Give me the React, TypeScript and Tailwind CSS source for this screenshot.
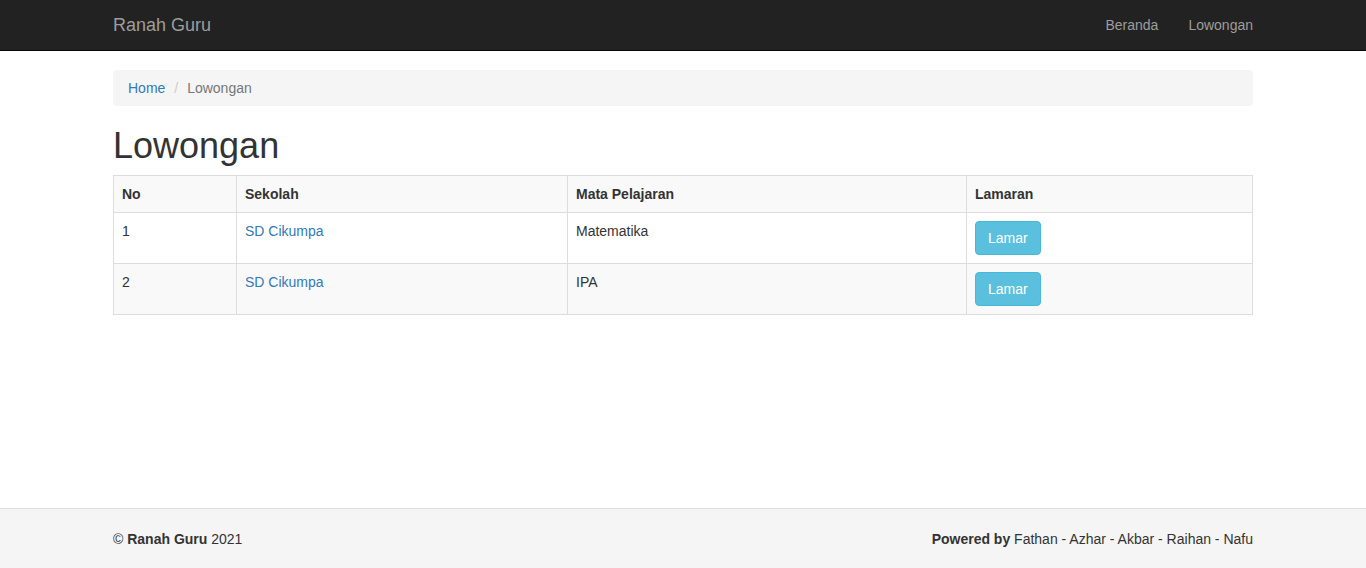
const rows = [
  { no: 1, sekolah: "SD Cikumpa", mapel: "Matematika" },
  { no: 2, sekolah: "SD Cikumpa", mapel: "IPA" },
]

export default function App() {
  return (
    <div className="min-h-screen flex flex-col bg-white text-[14px] leading-[20px] text-[#333] font-['Liberation_Sans',Arial,sans-serif]">
      <nav className="h-[51px] bg-[#222] border-b border-[#080808]">
        <div className="w-[1140px] mx-auto flex items-center justify-between h-[50px]">
          <a className="text-[18px] leading-[20px] text-[#9d9d9d]">Ranah Guru</a>
          <ul className="flex -mr-[15px]">
            <li><a className="block px-[15px] py-[15px] text-[#9d9d9d]">Beranda</a></li>
            <li><a className="block px-[15px] py-[15px] text-[#9d9d9d]">Lowongan</a></li>
          </ul>
        </div>
      </nav>

      <main className="w-[1140px] mx-auto">
        <ol className="mt-[19px] mb-[20px] flex px-[15px] py-[8px] bg-[#f5f5f5] rounded-[4px]">
          <li><a className="text-[#337ab7]">Home</a></li>
          <li className="text-[#777] ml-[4px]">
            <span className="px-[5px] text-[#ccc]">/{"\u00a0"}</span>
            <span>Lowongan</span>
          </li>
        </ol>

        <h1 className="text-[36px] leading-[39.6px] font-normal mb-[9px]">Lowongan</h1>

        <table className="w-full border-collapse border border-[#ddd] mb-[20px]">
          <tbody>
            <tr className="bg-[#f9f9f9]">
              <th className="w-[123px] border border-[#ddd] p-[8px] text-left font-bold">No</th>
              <th className="w-[331px] border border-[#ddd] p-[8px] text-left font-bold">Sekolah</th>
              <th className="w-[399px] border border-[#ddd] p-[8px] text-left font-bold">Mata Pelajaran</th>
              <th className="border border-[#ddd] p-[8px] text-left font-bold">Lamaran</th>
            </tr>
            {rows.map((r, i) => (
              <tr key={r.no} className={i % 2 === 1 ? "bg-[#f9f9f9]" : "bg-white"}>
                <td className="border border-[#ddd] p-[8px] align-top">{r.no}</td>
                <td className="border border-[#ddd] p-[8px] align-top">
                  <a className="text-[#337ab7]">{r.sekolah}</a>
                </td>
                <td className="border border-[#ddd] p-[8px] align-top">{r.mapel}</td>
                <td className="border border-[#ddd] p-[8px] align-top">
                  <button className="h-[34px] px-[12px] py-[6px] bg-[#5bc0de] border border-[#46b8da] rounded-[4px] text-white leading-[20px]">
                    Lamar
                  </button>
                </td>
              </tr>
            ))}
          </tbody>
        </table>
      </main>

      <footer className="mt-auto h-[60px] bg-[#f5f5f5] border-t border-[#ddd]">
        <div className="w-[1140px] mx-auto h-full flex items-center justify-between pt-[1px]">
          <p>
            © <b>Ranah Guru</b> 2021
          </p>
          <p>
            <b>Powered by</b> Fathan - Azhar - Akbar - Raihan - Nafu
          </p>
        </div>
      </footer>
    </div>
  )
}
